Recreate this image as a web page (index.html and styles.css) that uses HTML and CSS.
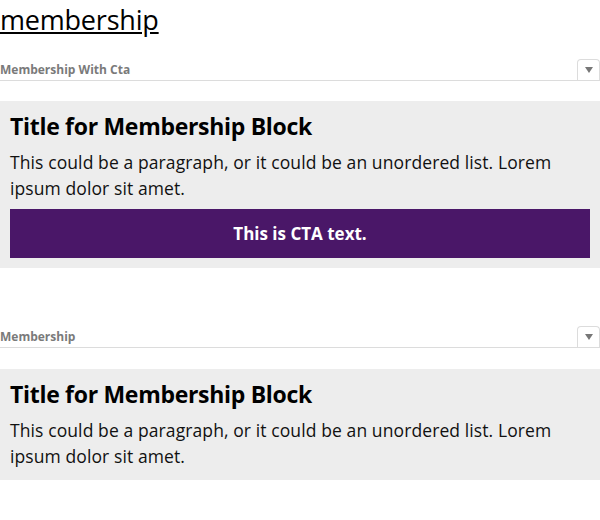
FILE: index.html
```html
<!DOCTYPE html>
<html lang="en">
<head>
<meta charset="utf-8">
<title>membership</title>
<link rel="stylesheet" href="styles.css">
</head>
<body>
<h1 class="page-title"><a href="#">membership</a></h1>

<section class="component">
  <div class="component-head">
    <span class="component-label">Membership With Cta</span>
    <span class="component-tab"><svg width="8" height="6" viewBox="0 0 8 6"><path d="M0 0H8L4 6Z" fill="#777"/></svg></span>
  </div>
  <div class="membership-block">
    <h2 class="block-title">Title for Membership Block</h2>
    <p class="block-text">This could be a paragraph, or it could be an unordered list. Lorem ipsum dolor sit amet.</p>
    <a class="cta" href="#">This is CTA text.</a>
  </div>
</section>

<section class="component component--spaced">
  <div class="component-head">
    <span class="component-label">Membership</span>
    <span class="component-tab"><svg width="8" height="6" viewBox="0 0 8 6"><path d="M0 0H8L4 6Z" fill="#777"/></svg></span>
  </div>
  <div class="membership-block membership-block--plain">
    <h2 class="block-title">Title for Membership Block</h2>
    <p class="block-text">This could be a paragraph, or it could be an unordered list. Lorem ipsum dolor sit amet.</p>
  </div>
</section>
</body>
</html>
```

FILE: styles.css
```css
body {
  margin: 0;
  font-family: "Open Sans", "Noto Sans", sans-serif;
  color: #000;
  background: #fff;
}

.page-title {
  margin: 0 0 19px;
  font-size: 27px;
  font-weight: 400;
  line-height: 40px;
  letter-spacing: -0.2px;
}

.page-title a {
  color: #000;
  text-decoration: underline;
}

.component-head {
  display: flex;
  justify-content: space-between;
  align-items: flex-end;
  border-bottom: 1px solid #dcdcdc;
}

.component-label {
  font-size: 12px;
  font-weight: 700;
  color: #7a7a7a;
  line-height: 14px;
  padding-bottom: 3px;
}

.component-tab {
  width: 21px;
  height: 20px;
  border: 1px solid #dcdcdc;
  border-bottom: none;
  border-radius: 4px 4px 0 0;
  display: flex;
  align-items: center;
  justify-content: center;
}

.component--spaced {
  margin-top: 58px;
}

.component--spaced .membership-block {
  margin-top: 21px;
}

.membership-block {
  margin-top: 20px;
  background: #ededed;
  padding: 10px;
}

.membership-block--plain {
  padding-bottom: 11px;
}

.block-title {
  margin: 0;
  font-size: 23px;
  font-weight: 700;
  line-height: 30px;
  letter-spacing: -0.3px;
}

.block-text {
  margin: 8px 0 8px;
  font-size: 17.5px;
  line-height: 26px;
  letter-spacing: 0.1px;
  color: #111;
}

.membership-block--plain .block-text {
  margin-bottom: 0;
}

.cta {
  display: block;
  height: 49px;
  line-height: 49px;
  background: #4a1768;
  color: #fff;
  text-align: center;
  font-size: 17px;
  font-weight: 700;
  text-decoration: none;
}
```
